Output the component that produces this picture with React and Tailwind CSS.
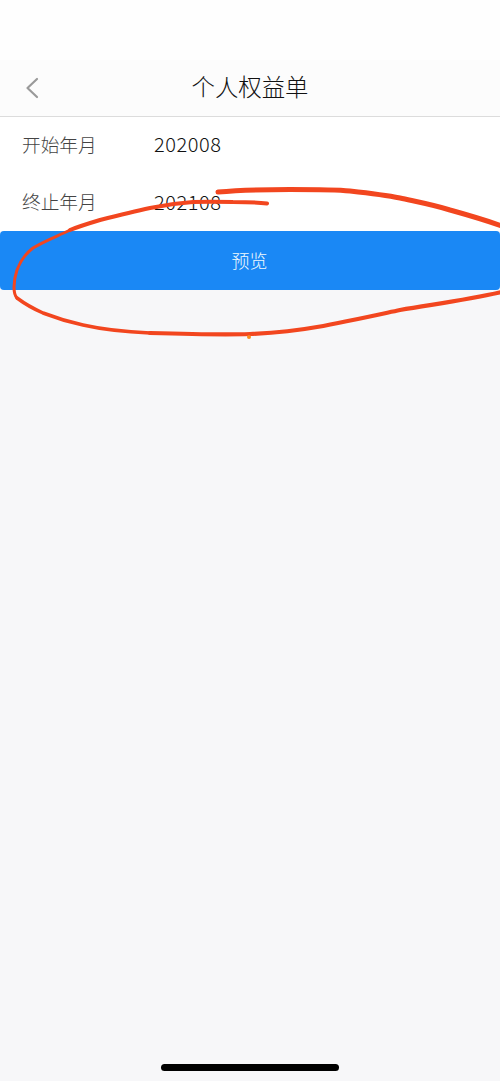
export default function App() {
  return (
    <div className="relative flex h-[1081px] w-[500px] flex-col overflow-hidden bg-[#f7f7f9] font-['Noto_Sans_CJK_SC','Noto_Sans',sans-serif]">
      <div className="h-[60px] bg-[#fefefe]" />
      <header className="relative flex h-[57px] items-center border-b border-[#dcdcdc] bg-[#fcfcfc]">
        <svg className="ml-[25px] h-[24px] w-[14px] text-[#9a9a9a]" viewBox="0 0 14 24" fill="none" stroke="currentColor" strokeWidth="2.2" strokeLinecap="round" strokeLinejoin="round">
          <path d="M12 3 L2.5 12 L12 21" />
        </svg>
        <h1 className="mb-[3px] flex-1 pr-[39px] text-center text-[23.4px] font-light leading-none text-[#111111]">个人权益单</h1>
      </header>
      <div className="bg-white">
        <div className="flex h-[57px] items-center pb-[3px] pl-[22px]">
          <span className="w-[132px] text-[18.7px] font-light text-[#444444]">开始年月</span>
          <span className="text-[20px] font-light tracking-[0.55px] text-[#111111]">202008</span>
        </div>
        <div className="flex h-[57px] items-center pb-[2px] pl-[22px]">
          <span className="w-[132px] text-[18.7px] font-light text-[#444444]">终止年月</span>
          <span className="text-[20px] font-light tracking-[0.55px] text-[#111111]">202108</span>
        </div>
      </div>
      <button className="flex h-[59px] w-full items-center justify-center rounded-[4px] bg-[#1a88f5] pr-[1px] text-[18px] font-light text-[#f0f9fd]">预览</button>
      <svg className="pointer-events-none absolute left-0 top-0 h-[1081px] w-[500px]" viewBox="0 0 500 1081" fill="none" stroke="#f2461f" strokeLinecap="round" strokeLinejoin="round">
        <path strokeWidth="5" d="M218 192 C240 190 262 189.500 290 189.500 C315 189.500 335 189.500 350 191 C368 193 385 195 400 198 C418 202 434 205 450 210 C468 215 485 220 502 226" />
        <path strokeWidth="4" d="M267 203.500 C255 202 245 202 233 202 C218 201.500 205 201.500 193 202 C178 203 164 205 150 208 C132 212 116 216 100 220 C90 223 80 226 70 230" />
        <path strokeWidth="3" d="M70 230 C58 236 44 241 33 248 C25 254 20 262 17 270 C15 276 14 281 14 287 C14 292 15 296 17 298" />
        <path strokeWidth="3.500" d="M17 298 C25 304 34 309 43 313 C56 318 69 322 83 325 C105 330 128 332 150 333" />
        <path strokeWidth="4.200" d="M150 333 C185 334 220 335 250 334 C273 333 295 331 317 327 C345 322 372 316 400 310 C435 304 468 300 502 292" />
        <circle cx="249" cy="337" r="2" fill="#f98a1f" stroke="none" />
      </svg>
      <div className="absolute bottom-[10px] left-[161px] h-[7px] w-[178px] rounded-full bg-black" />
    </div>
  );
}
